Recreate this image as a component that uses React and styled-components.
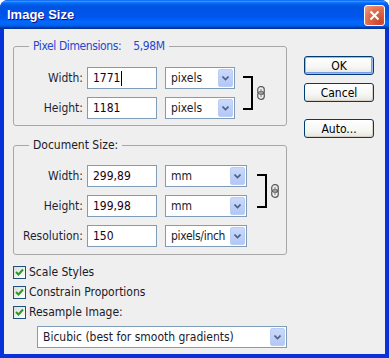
import styled, { createGlobalStyle } from "styled-components";

const GlobalStyle = createGlobalStyle`
  html, body {
    margin: 0;
    padding: 0;
    background: #ffffff;
  }
  body {
    font-family: "DejaVu Sans Condensed", "DejaVu Sans", sans-serif;
    font-size: 12px;
    color: #000;
  }
`;

const Window = styled.div`
  width: 389px;
  height: 358px;
  box-sizing: border-box;
  display: flex;
  flex-direction: column;
  background: #0831d9;
  border-radius: 8px 8px 0 0;
  overflow: hidden;
`;

const TitleBar = styled.div`
  flex: none;
  height: 29px;
  display: flex;
  align-items: center;
  justify-content: space-between;
  padding: 0 4px 0 7px;
  background: linear-gradient(
    to bottom,
    #0058ee 0%,
    #3a93ff 4%,
    #288eff 6%,
    #127dff 8%,
    #036ffc 10%,
    #0262ee 14%,
    #0057e5 20%,
    #0054e3 24%,
    #0055eb 56%,
    #005bf5 66%,
    #026afe 76%,
    #0062ef 86%,
    #0052d6 92%,
    #0040ab 94%,
    #003092 100%
  );
`;

const Title = styled.span`
  font-family: "Liberation Sans", Arial, sans-serif;
  font-weight: 700;
  font-size: 13px;
  color: #fff;
  text-shadow: 1px 1px #0f1089;
`;

const CloseButton = styled.div`
  width: 21px;
  height: 21px;
  box-sizing: border-box;
  border: 1px solid #fff;
  border-radius: 3px;
  background: radial-gradient(circle at 80% 85%, #cc4628 0%, #e06a4a 55%, #f0a088 100%);
  display: flex;
  align-items: center;
  justify-content: center;
  margin-top: 2px;
`;

const Client = styled.div`
  flex: 1;
  margin: 0 4px 4px;
  background: #efefef;
  display: flex;
  padding: 10px 0 0 9px;
`;

const LeftColumn = styled.div`
  width: 274px;
  display: flex;
  flex-direction: column;
`;

const Group = styled.fieldset`
  margin: ${(p) => (p.$first ? "0" : "12px 0 0")};
  padding: ${(p) => (p.$first ? "14px 0 6px" : "13px 0 7px")};
  border: 1px solid #a7a7a7;
  border-radius: 3px;
  min-width: 0;
`;

const Legend = styled.legend`
  margin-left: 15px;
  padding: 0 4px;
  line-height: 14px;
  color: ${(p) => (p.$accent ? "#2449cf" : "#1a1a2a")};
  letter-spacing: ${(p) => (p.$accent ? "-0.4px" : "0")};
`;

const Size = styled.span`
  margin-left: 12px;
`;

const Rows = styled.div`
  display: grid;
  grid-template-columns: 69px auto auto auto auto;
  justify-content: start;
  grid-auto-rows: 22px;
  row-gap: 8px;
  align-items: center;
`;

const Label = styled.span`
  text-align: right;
  color: #1f1f33;
`;

const TextBox = styled.div`
  margin-left: 4px;
  width: 70px;
  height: 22px;
  box-sizing: border-box;
  border: 1px solid #7f9db9;
  background: #fff;
  padding-left: 5px;
  display: flex;
  align-items: center;
  color: #200010;
`;

const Caret = styled.span`
  width: 1px;
  height: 15px;
  background: #000;
  margin-left: 1px;
`;

const Combo = styled.div`
  margin-left: ${(p) => p.$indent || 8}px;
  width: ${(p) => p.$width}px;
  height: 22px;
  box-sizing: border-box;
  border: 1px solid #7f9db9;
  background: #fff;
  display: flex;
  align-items: center;
  justify-content: space-between;
  padding-left: 5px;
  color: #1a1a2a;
  white-space: nowrap;
`;

const ComboText = styled.span`
  letter-spacing: ${(p) => (p.$tight ? "-0.3px" : "0")};
`;

const ArrowButton = styled.div`
  flex: none;
  width: 15px;
  height: 18px;
  margin-right: 1px;
  box-sizing: border-box;
  border: 1px solid #bccdf5;
  border-radius: 2px;
  background: linear-gradient(to bottom, #cad9fc, #b3c7f5);
  display: flex;
  align-items: center;
  justify-content: center;
`;

const Bracket = styled.div`
  grid-column: 4;
  grid-row: 1 / span 2;
  align-self: center;
  margin-left: ${(p) => p.$gap}px;
  width: 8px;
  height: 30px;
  border: 2px solid #000;
  border-left: none;
`;

const LinkIcon = styled.svg`
  grid-column: 5;
  grid-row: 1 / span 2;
  align-self: center;
  margin-left: 4px;
`;

const Checks = styled.div`
  margin-top: 7px;
  display: flex;
  flex-direction: column;
`;

const CheckRow = styled.div`
  height: 20px;
  display: flex;
  align-items: center;
  gap: 3px;
  color: #1a1a2a;
`;

const CheckBox = styled.div`
  width: 13px;
  height: 13px;
  box-sizing: border-box;
  border: 1px solid #1c5180;
  background: linear-gradient(135deg, #dcdcd7, #ffffff);
  display: flex;
  align-items: center;
  justify-content: center;
`;

const BottomSelect = styled.div`
  margin-top: 4px;
`;

const RightColumn = styled.div`
  margin-left: 17px;
  padding-top: 17px;
  display: flex;
  flex-direction: column;
`;

const Button = styled.div`
  width: 70px;
  height: 19px;
  box-sizing: border-box;
  margin-top: ${(p) => p.$gap || 0}px;
  border: 1px solid #003c74;
  border-radius: 3px;
  background: linear-gradient(to bottom, #ffffff 0%, #f6f6f3 60%, #e6e5e0 100%);
  box-shadow: ${(p) =>
    p.$default ? "inset 0 0 0 1px #9eb9ef, inset -1px -1px 0 1px #7c9be8" : "inset -1px -1px 0 #d6d0c5"};
  display: flex;
  align-items: center;
  justify-content: center;
  color: #000;
`;

function Chevron() {
  return (
    <svg width="7" height="5" viewBox="0 0 7 5">
      <path d="M0.5 0.5 L3.5 3.5 L6.5 0.5" fill="none" stroke="#4d6185" strokeWidth="1.6" />
    </svg>
  );
}

function Select({ width, indent, tight, children }) {
  return (
    <Combo $width={width} $indent={indent}>
      <ComboText $tight={tight}>{children}</ComboText>
      <ArrowButton>
        <Chevron />
      </ArrowButton>
    </Combo>
  );
}

function Link() {
  return (
    <LinkIcon width="8" height="14" viewBox="0 0 8 14">
      <rect x="0.7" y="0.7" width="6.6" height="7.6" rx="3" fill="#ececec" stroke="#5a5a5a" strokeWidth="1.2" />
      <rect x="0.7" y="5.7" width="6.6" height="7.6" rx="3" fill="none" stroke="#5a5a5a" strokeWidth="1.2" />
      <line x1="4" y1="3" x2="4" y2="11" stroke="#8a8a8a" strokeWidth="1.2" />
    </LinkIcon>
  );
}

function Check({ children }) {
  return (
    <CheckRow>
      <CheckBox>
        <svg width="9" height="9" viewBox="0 0 9 9">
          <path d="M1 4 L3.5 6.5 L8 1.5" fill="none" stroke="#21a121" strokeWidth="2" />
        </svg>
      </CheckBox>
      <span>{children}</span>
    </CheckRow>
  );
}

export default function App() {
  return (
    <>
      <GlobalStyle />
      <Window>
        <TitleBar>
          <Title>Image Size</Title>
          <CloseButton>
            <svg width="11" height="11" viewBox="0 0 11 11">
              <path d="M1.5 1.5 L9.5 9.5 M9.5 1.5 L1.5 9.5" stroke="#fff" strokeWidth="2" />
            </svg>
          </CloseButton>
        </TitleBar>

        <Client>
          <LeftColumn>
            <Group $first>
              <Legend $accent>
                Pixel Dimensions:<Size>5,98M</Size>
              </Legend>
              <Rows>
                <Label>Width:</Label>
                <TextBox>
                  1771
                  <Caret />
                </TextBox>
                <Select width={70}>pixels</Select>
                <Label>Height:</Label>
                <TextBox>1181</TextBox>
                <Select width={70}>pixels</Select>
                <Bracket $gap={8} />
                <Link />
              </Rows>
            </Group>

            <Group>
              <Legend>Document Size:</Legend>
              <Rows>
                <Label>Width:</Label>
                <TextBox>299,89</TextBox>
                <Select width={82}>mm</Select>
                <Label>Height:</Label>
                <TextBox>199,98</TextBox>
                <Select width={82}>mm</Select>
                <Label>Resolution:</Label>
                <TextBox>150</TextBox>
                <Select width={82} tight>
                  pixels/inch
                </Select>
                <Bracket $gap={10} />
                <Link />
              </Rows>
            </Group>

            <Checks>
              <Check>Scale Styles</Check>
              <Check>Constrain Proportions</Check>
              <Check>Resample Image:</Check>
            </Checks>

            <BottomSelect>
              <Select width={250} indent={24}>
                Bicubic (best for smooth gradients)
              </Select>
            </BottomSelect>
          </LeftColumn>

          <RightColumn>
            <Button $default>OK</Button>
            <Button $gap={8}>Cancel</Button>
            <Button $gap={17}>Auto...</Button>
          </RightColumn>
        </Client>
      </Window>
    </>
  );
}
